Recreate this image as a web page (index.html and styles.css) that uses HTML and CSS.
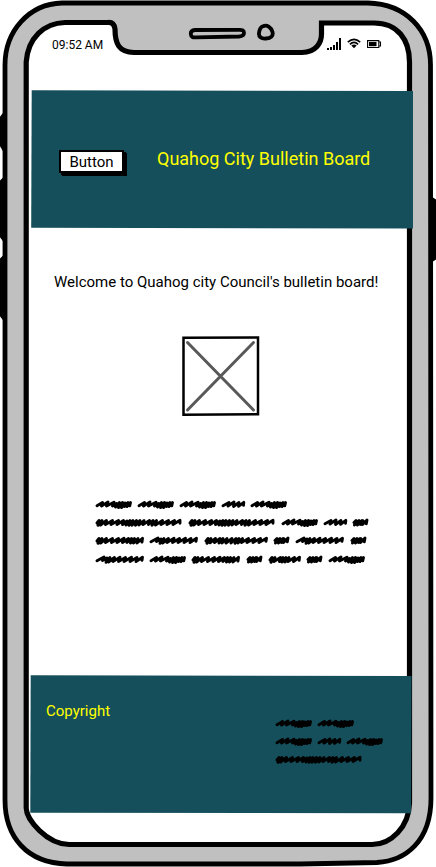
FILE: index.html
```html
<!DOCTYPE html>
<html lang="en">
<head>
<meta charset="utf-8">
<title>Quahog City Bulletin Board</title>
<link rel="stylesheet" href="styles.css">
</head>
<body>
<svg class="defs" aria-hidden="true">
  <symbol id="w-word" viewBox="0 0 42 12"><path d="M2 7.800 7.500 4.500 6.500 8 13 4 11.500 8 19 4.200 17.500 8 21.500 5.500 20.500 9 24.500 4.500 23.500 9.500 27.500 4.500 26.500 9.500 30 5 29.500 8.500 33 4.500 32 8.500 35.500 4.500 34.800 7.800"/></symbol>
  <symbol id="w-short" viewBox="0 0 29.5 12"><path d="M2 7.800 8 4.500 7 8 13 4 12.500 8.500 18 4.500 17.500 8.300 22.800 4.300 22.500 7.300"/></symbol>
  <symbol id="w-tiny" viewBox="0 0 22 12"><path d="M2 6.500 4 4.500 2.500 9 7 4.500 5.500 9 10 4.500 8.500 8.500 11 4.800 10.500 8.500 15 4 14.300 7.800"/></symbol>
  <symbol id="w-mid" viewBox="0 0 54.5 12"><path d="M2 7 4 4.500 3 9.300 7 4.500 5.500 9 11.500 4.500 10.500 8.500 17.500 4.500 16.500 8.500 23.500 4.500 22 8.500 29 4.300 27.500 8.500 33.500 4.500 32 8.500 36.500 4.500 35.500 9 39.500 4.500 38.500 9 43 4.500 42 9 47.500 4.300 47 8"/></symbol>
  <symbol id="w-wave" viewBox="0 0 54.5 12"><path d="M2 7.800 9 4 7.500 7.500 12 5 11 9.300 15 4.500 13.500 9 19.500 4.500 18 8.500 25 4.300 23.500 8.500 30.500 4.500 29 8.500 36.500 4.300 35 8.500 42 4.500 41 8.500 47.500 4.200 47 7.300"/></symbol>
  <symbol id="w-wide" viewBox="0 0 69.5 12"><path d="M2 7 4 4.500 3 9.300 7 4.500 6 8.800 11.500 4.500 10.500 8.500 16 4.500 15 9 19 4.500 18 9 23 4.500 22 9 28 4.500 27 9 32 4.500 31 9.300 35 4.500 34 9 38.500 4.500 37.500 8.500 44.500 4.500 43 8.500 50.500 4.500 49 8.500 56.500 4.500 55 8.500 62.500 4.200 62 7.300"/></symbol>
  <symbol id="w-semi" viewBox="0 0 38 12"><path d="M2 7 4 4.500 3 9.300 7 4.500 6 8.500 12.500 4.500 11.500 8.500 15 4.500 14 9 18 4.500 17 9 21 4.500 20 8.500 26.500 4.500 25.500 8.500 31.500 4.200 31.200 7.300"/></symbol>
  <symbol id="w-long" viewBox="0 0 93 12"><path d="M2 7 4 4.500 3 9.300 7 4.500 5.500 9 11.500 4.500 10.500 8.500 17.500 4.500 16 8.500 23.500 4.500 22 8.500 28.500 4.500 27.500 8.500 32 5 31 9 35 4.500 34 9.300 38 4.500 37 9.300 41.500 4.500 40.500 9.300 45 4.500 44 9 49 4.500 48 8.500 54.500 4.500 53.500 8.500 58 4.500 57 9.300 61.500 4.500 60.500 9 67.500 4.500 66 8.500 73.500 4.500 72 8.500 79.500 4.500 78 8.500 85 4.200 85 7.300"/></symbol>
</svg>
<main class="phone">
  <svg class="frame" viewBox="0 0 436 867" aria-hidden="true">
    <path class="key" d="M4 113 1 117V146L4 151M4 178 1 181V237L4 241M4 256 1 259V316L4 320M432 198 435 200V259L432 261"/>
    <path class="case" d="M62 3H368C406 4 430.500 30 430.500 65L431 798C431 842 405 861 377 862.500L300 864H67C27 863 5 837 5 800V65C5 31 29 4 62 3Z"/>
    <path class="screen" d="M65 22.500H108Q114 22 115 29C115 44 119 52 134 52.500H302C316 52 321.500 43 321.500 34V23H374C398 23 409.500 40 409.500 62V803C409 827 391 844.500 372 844.500H69C47 844 26.500 820 26.200 808V62C28 38 44 23 65 22.500Z"/>
    <path class="speaker" d="M195 30Q190.500 30.500 190.800 34 191 38 196 37.300L239 36.500Q244 36 244 33 244 29.500 239 29.800ZM263 26.300C267 24.500 271 27 272.500 32 273.500 36 271 38.300 266 38.500 261 39 258.500 36.500 259 33 259.500 29 261 27 263 26.300Z"/>
  </svg>
  <div class="status">
    <span>09:52 AM</span>
    <svg class="status-icons" viewBox="0 0 56 14" aria-hidden="true">
      <path d="M0 11h2v2H0zM3 10h2v3H3zM6 8h2v5H6zM9 5h2v8H9zM12 1h2v12h-2z"/>
      <path class="wifi" d="M20.800 5.200Q27-.600 33.200 5.200M22.900 7.400Q27 3.400 31.100 7.400"/><path d="M24.300 8.600Q27 6.400 29.700 8.600L27 11.300z"/>
      <path class="cell" d="M40.600 3.600h11.200v6.900H40.600zM52 5h1.500v4H52"/><path d="M42 5h7.500v4.200H42z"/>
    </svg>
  </div>
  <header class="header">
    <svg class="panel" viewBox="0 0 382 139" aria-hidden="true"><path d="M.7.200 382 1V138.500L.2 137.700Z"/></svg>
    <button class="button">Button</button>
    <h1 class="title">Quahog City Bulletin Board</h1>
  </header>
  <section class="content">
    <p class="welcome">Welcome to Quahog city Council's bulletin board!</p>
    <svg class="picture" viewBox="0 0 78 80" aria-hidden="true"><path class="box" d="M1.500 1.700 76 1.500V78.300L1.500 78.700Z"/><path class="cross" d="M5.500 6.500 71.500 74M71.500 6.500 5.500 74"/></svg>
    <div class="scribble">
      <div class="line"><svg class="word"><use href="#w-word"/></svg><svg class="word"><use href="#w-word"/></svg><svg class="word"><use href="#w-word"/></svg><svg class="short"><use href="#w-short"/></svg><svg class="word"><use href="#w-word"/></svg></div>
      <div class="line"><svg class="long"><use href="#w-long"/></svg><svg class="long"><use href="#w-long"/></svg><svg class="word"><use href="#w-word"/></svg><svg class="short"><use href="#w-short"/></svg><svg class="tiny"><use href="#w-tiny"/></svg></div>
      <div class="line"><svg class="mid"><use href="#w-mid"/></svg><svg class="mid"><use href="#w-wave"/></svg><svg class="wide"><use href="#w-wide"/></svg><svg class="tiny"><use href="#w-tiny"/></svg><svg class="mid"><use href="#w-wave"/></svg><svg class="tiny"><use href="#w-tiny"/></svg></div>
      <div class="line"><svg class="mid"><use href="#w-wave"/></svg><svg class="word"><use href="#w-word"/></svg><svg class="mid"><use href="#w-mid"/></svg><svg class="tiny"><use href="#w-tiny"/></svg><svg class="semi"><use href="#w-semi"/></svg><svg class="tiny"><use href="#w-tiny"/></svg><svg class="word"><use href="#w-word"/></svg></div>
    </div>
  </section>
  <footer class="footer">
    <svg class="panel" viewBox="0 0 382 139" aria-hidden="true"><path d="M.7.200 381.500 1 381 138.300 .3 137.700Z"/></svg>
    <p class="copyright">Copyright</p>
    <div class="scribble">
      <div class="line"><svg class="word"><use href="#w-word"/></svg><svg class="word"><use href="#w-word"/></svg></div>
      <div class="line"><svg class="word"><use href="#w-word"/></svg><svg class="short"><use href="#w-short"/></svg><svg class="word"><use href="#w-word"/></svg></div>
      <div class="line"><svg class="long"><use href="#w-long"/></svg></div>
    </div>
  </footer>
</main>
</body>
</html>
```
FILE: styles.css
```css
* { box-sizing: border-box; }
body { margin: 0; background: #fff; color: #000; font-family: Roboto, sans-serif; overflow: hidden; }
h1, p { margin: 0; font-weight: 400; white-space: nowrap; }
svg { display: block; flex: none; }
.defs { position: absolute; width: 0; height: 0; }

.phone { position: relative; isolation: isolate; width: 436px; height: 867px; padding: 36px 23px 0 31px; display: flex; flex-direction: column; }
.frame { position: absolute; inset: 0; width: 436px; height: 867px; z-index: -2; }
.frame path { stroke: #000; stroke-width: 5; }
.frame .key { fill: #000; stroke-width: 2; }
.frame .case { fill: #c0c0c0; stroke-width: 4.8; }
.frame .screen { fill: #fff; stroke-width: 5.2; }
.frame .speaker { fill: #c0c0c0; stroke-width: 3.8; }

.status { height: 54px; padding: 0 30px 0 21px; display: flex; justify-content: space-between; font-size: 12px; line-height: 18px; }
.status-icons { width: 56px; height: 14px; margin-top: 1px; }
.wifi { fill: none; stroke: #000; stroke-width: 1.6; }
.cell { fill: none; stroke: #000; stroke-width: 1.1; }

.header { position: relative; height: 139px; padding: 60px 0 0 28px; display: flex; align-items: flex-start; }
.panel { position: absolute; inset: 0; width: 382px; height: 139px; z-index: -1; fill: #154f5c; }
.button { width: 65px; height: 23px; margin: 0; padding: 1px 0 0; border: 2px solid #000; background: #fff; color: #000; font: 15px/18px Roboto, sans-serif; box-shadow: 2px 2px 0 #000, 3px 3px 0 #000; }
.title { margin: -4px 0 0 33px; color: #ff0; font-size: 18px; line-height: 26px; }

.content { height: 446px; display: flex; flex-direction: column; align-items: flex-start; padding: 43px 0 0 23px; }
.welcome { font-size: 15px; line-height: 20px; }
.picture { width: 78px; height: 80px; margin: 44px 0 0 128px; fill: none; }
.box { stroke: #000; stroke-width: 2.5; }
.cross { stroke: #595959; stroke-width: 3; stroke-linecap: round; }
.scribble { display: flex; flex-direction: column; gap: 6.2px; fill: none; stroke: #000; stroke-width: 2.9; stroke-linecap: round; stroke-linejoin: round; }
.content .scribble { margin: 82px 0 0 40.5px; }
.line { display: flex; height: 12px; }
.line svg { height: 12px; }
.word { width: 42px; }
.short { width: 29.5px; }
.tiny { width: 22px; }
.mid { width: 54.5px; }
.wide { width: 69.5px; }
.semi { width: 38px; }
.long { width: 93px; }

.footer { position: relative; height: 139px; margin-left: -1px; display: flex; }
.copyright { margin: 26px 0 0 16px; color: #ff0; font-size: 15px; line-height: 20px; }
.footer .scribble { margin: 41.5px 0 0 164.5px; }
```
